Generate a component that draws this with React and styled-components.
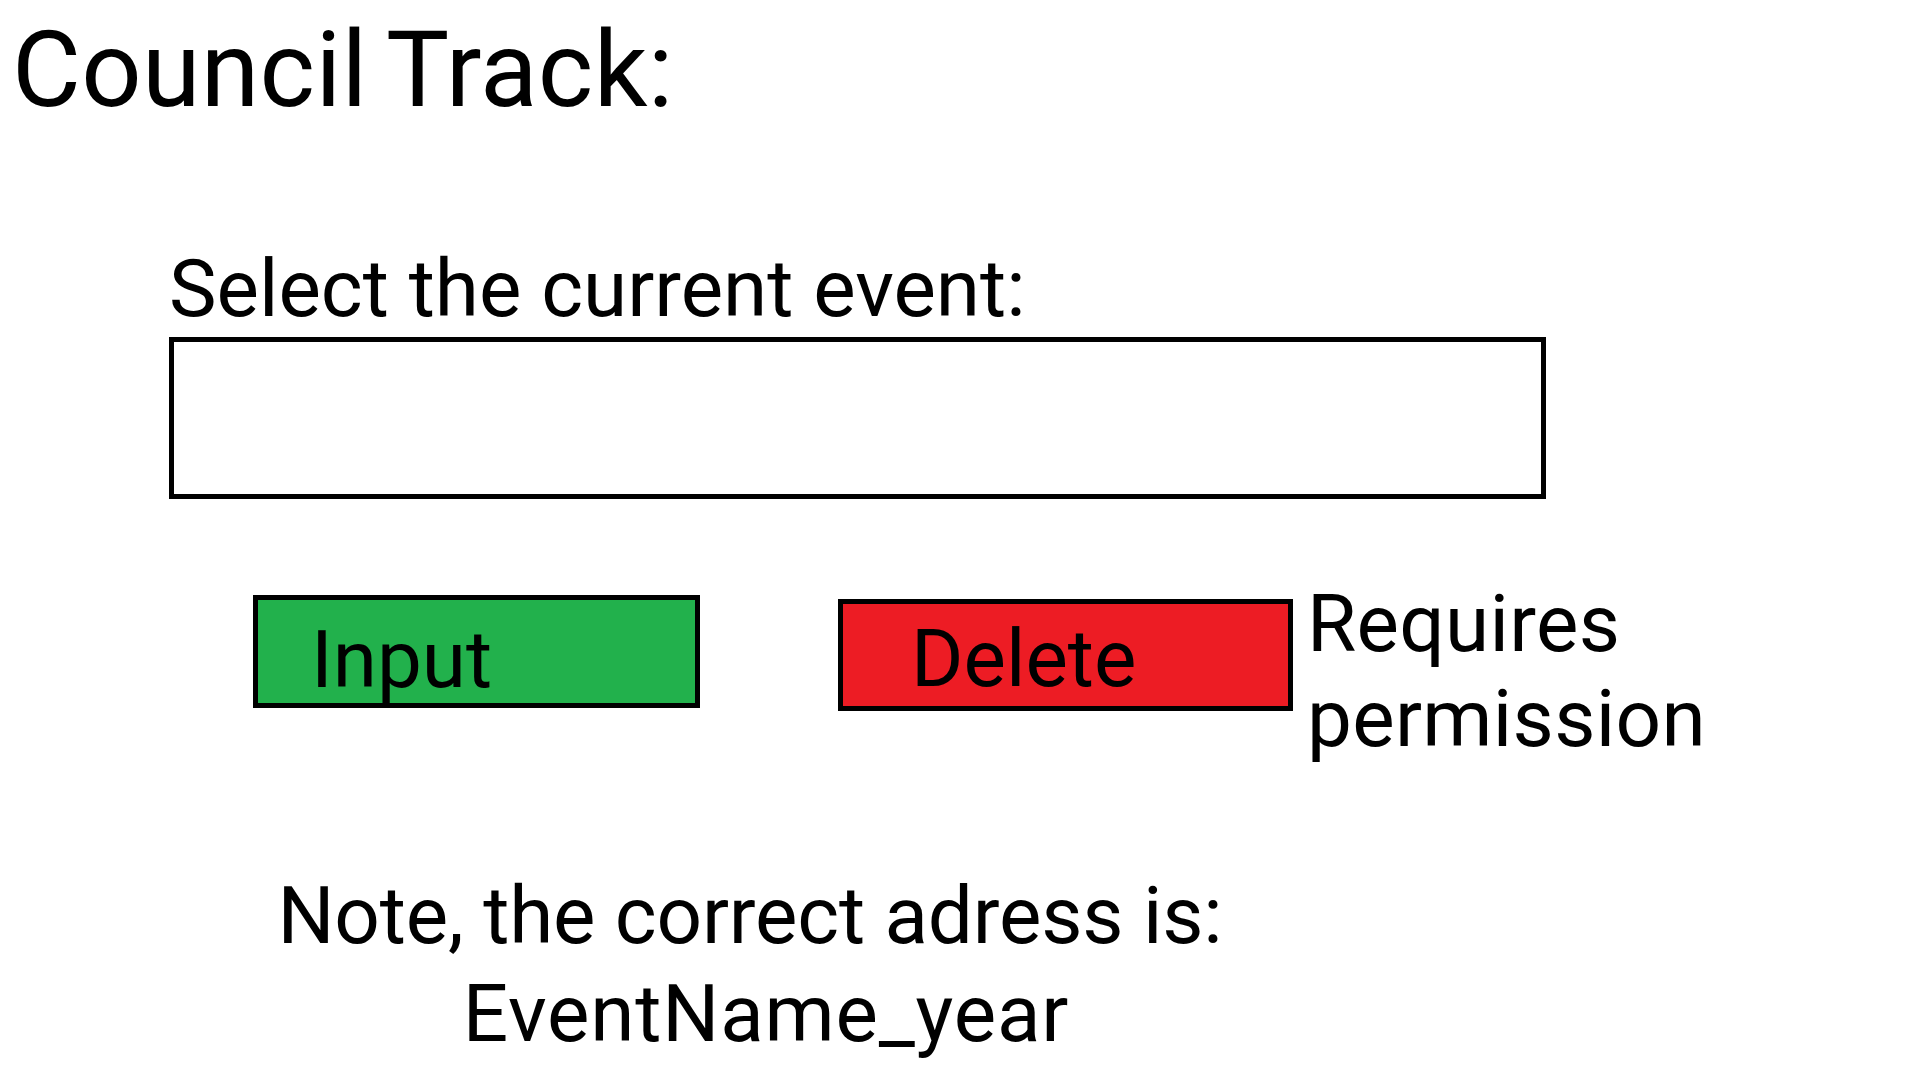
import styled, { createGlobalStyle } from "styled-components";

const GlobalStyle = createGlobalStyle`
    body {
        margin: 0;
        background: #ffffff;
        color: #000000;
        font-family: Roboto, "Liberation Sans", sans-serif;
    }
`;

const Page = styled.div`
    width: 1920px;
    min-height: 1080px;
    padding-top: 10px;
    box-sizing: border-box;
`;

// 페이지 제목
const Title = styled.h1`
    margin: 0 0 0 12px;
    font-size: 106px;
    line-height: 120px;
    font-weight: 400;
    letter-spacing: 0.3px;
    word-spacing: -6px;
`;

const Form = styled.section`
    display: flex;
    flex-direction: column;
    align-items: flex-start;
    margin: 111px 0 0 169px;
`;

const Label = styled.label`
    font-size: 80px;
    line-height: 96px;
`;

const EventField = styled.input`
    width: 1377px;
    height: 162px;
    box-sizing: border-box;
    border: 5px solid #000000;
    background: #ffffff;
    outline: none;
    font-family: inherit;
    font-size: 60px;
`;

const ActionRow = styled.div`
    display: flex;
    align-items: flex-start;
    margin: 78px 0 0 84px;
`;

const ActionButton = styled.button`
    width: ${(p) => p.$width}px;
    height: ${(p) => p.$height}px;
    margin: ${(p) => p.$top}px ${(p) => p.$right}px 0 0;
    padding: ${(p) => p.$padTop}px 0 0 ${(p) => p.$padLeft}px;
    box-sizing: border-box;
    border: 5px solid #000000;
    border-radius: 0;
    background: ${(p) => p.$bg};
    color: #000000;
    font-family: inherit;
    font-size: 80px;
    line-height: 80px;
    text-align: left;
    cursor: pointer;
`;

const Permission = styled.p`
    margin: 0;
    font-size: 80px;
    line-height: 95px;
    letter-spacing: 0.3px;
`;

const Note = styled.p`
    display: flex;
    flex-direction: column;
    align-items: center;
    width: 1162px;
    margin: 100px 0 0 0;
    font-size: 80px;
    line-height: 98px;
`;

const NoteLine = styled.span`
    margin-left: ${(p) => p.$shift || 0}px;
    letter-spacing: ${(p) => p.$spacing || 0}px;
`;

const App = () => {
    return (
        <Page>
            <GlobalStyle />
            <Title>Council Track:</Title>
            <Form>
                <Label htmlFor="event">Select the current event:</Label>
                <EventField id="event" type="text" />
                <ActionRow>
                    <ActionButton $bg="#22b14c" $width={447} $height={113} $top={18} $right={138} $padTop={16} $padLeft={53}>
                        Input
                    </ActionButton>
                    <ActionButton $bg="#ed1c24" $width={455} $height={112} $top={22} $right={14} $padTop={8} $padLeft={68}>
                        Delete
                    </ActionButton>
                    <Permission>
                        Requires
                        <br />
                        permission
                    </Permission>
                </ActionRow>
                <Note>
                    <NoteLine $spacing={-0.2}>Note, the correct adress is:</NoteLine>
                    <NoteLine $shift={32} $spacing={0.8}>EventName_year</NoteLine>
                </Note>
            </Form>
        </Page>
    );
};

export default App;
